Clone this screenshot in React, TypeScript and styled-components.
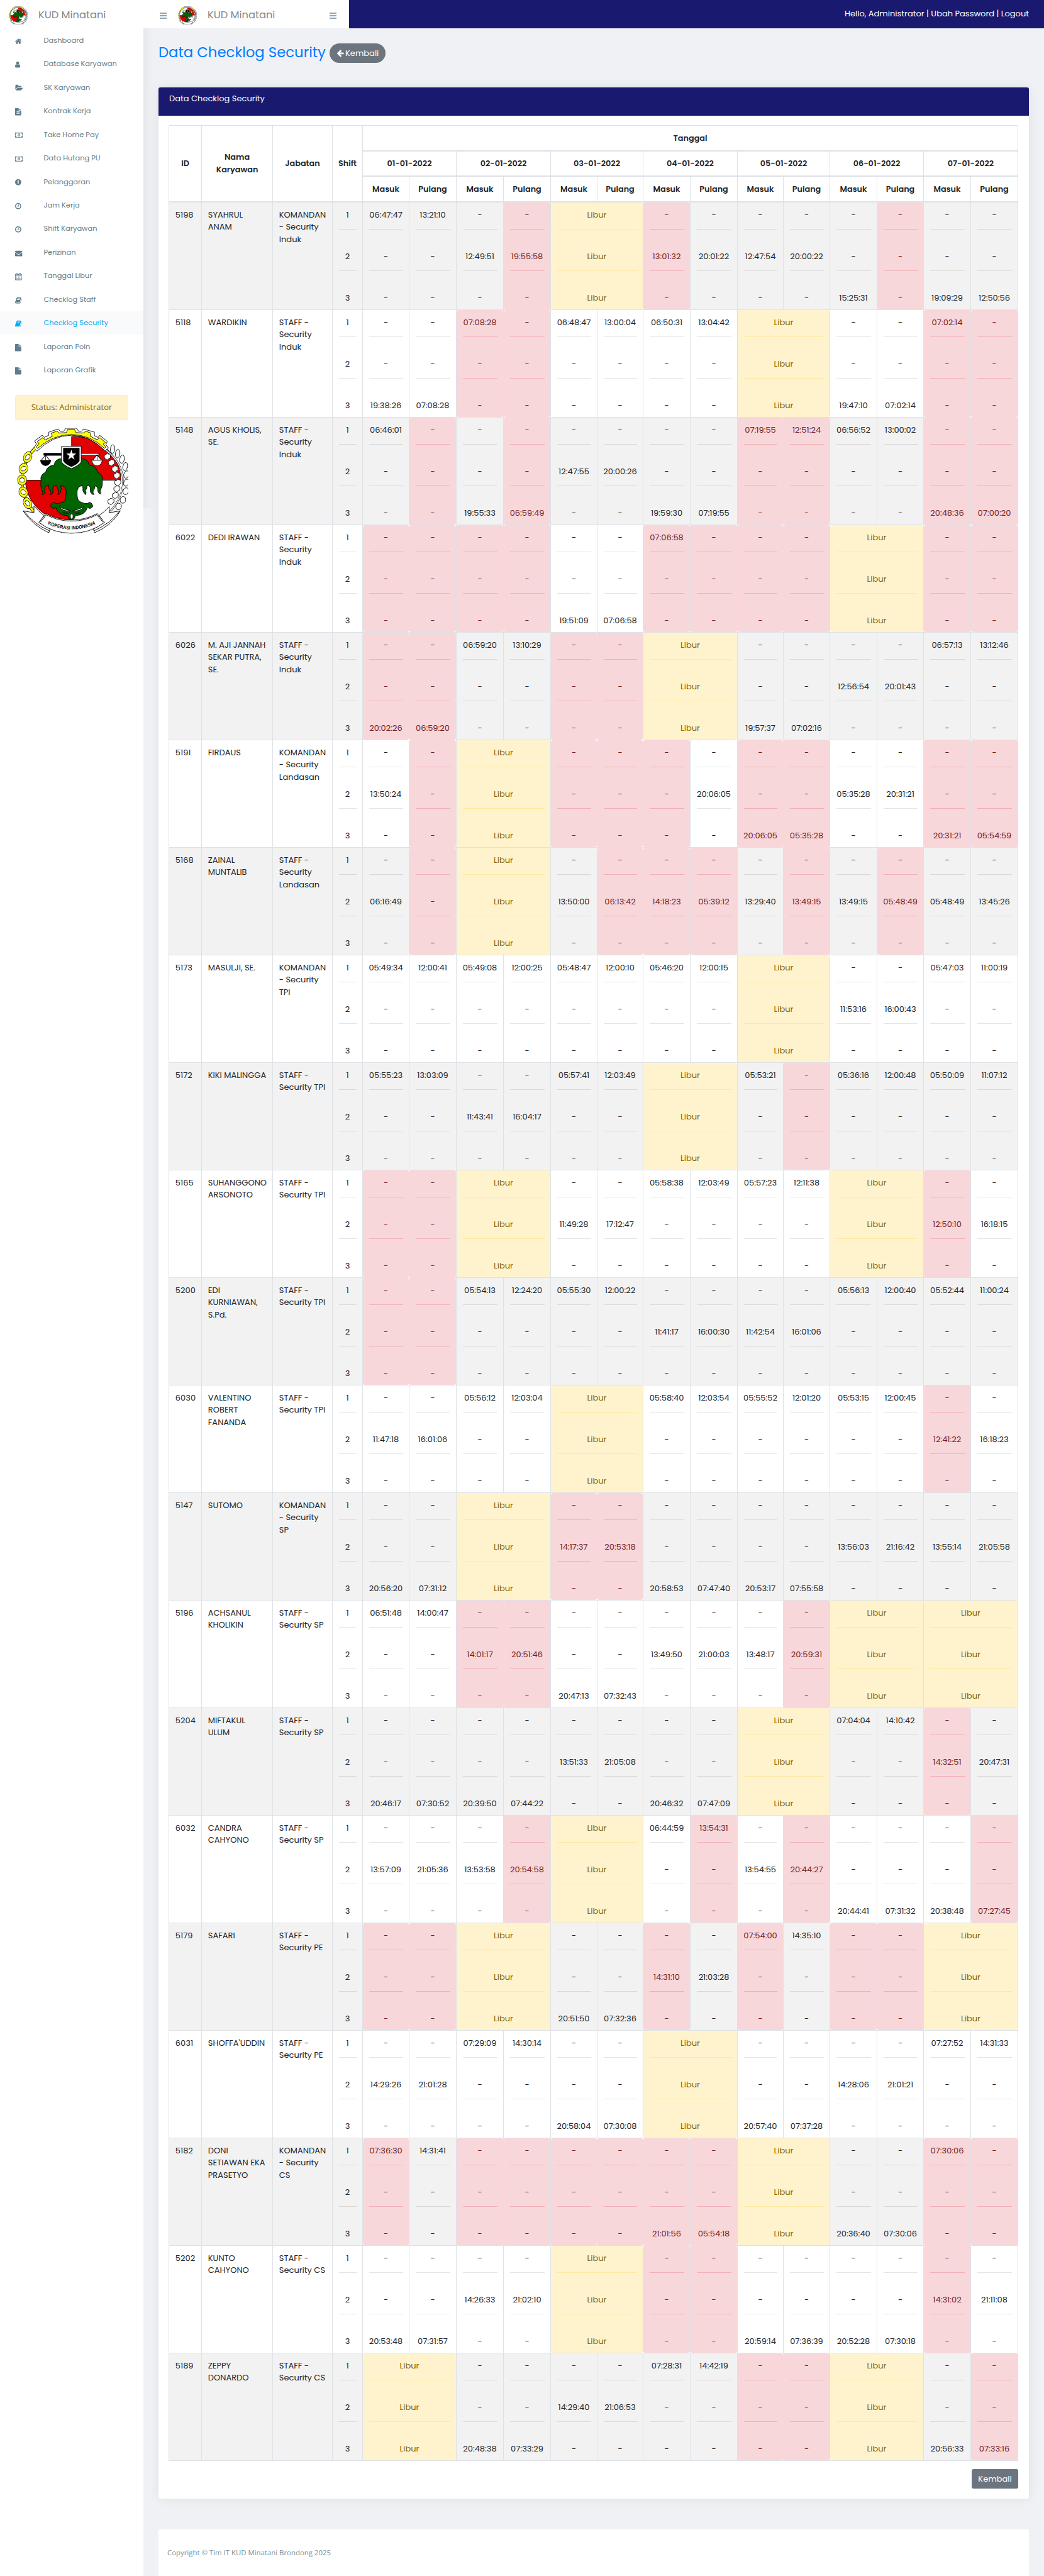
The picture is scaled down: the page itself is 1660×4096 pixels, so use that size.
import React from "react";
import styled, { createGlobalStyle, css } from "styled-components";

const GlobalStyle = createGlobalStyle`
  *, *::before, *::after { box-sizing: border-box; }
  html, body { margin: 0; padding: 0; }
  body {
    background: #eff1f5;
    color: #212529;
    font-family: Poppins, Inter, "Open Sans", sans-serif;
    font-size: 13.02px;
    line-height: 19.54px;
  }
`;

/* ---------- icons ---------- */

type Glyph = { x: number; d: string };

const glyphs: Record<string, Glyph> = {
  home: { x: 96, d: "M1472 992v480q0 26-19 45t-45 19h-384v-384h-256v384h-384q-26 0-45-19t-19-45v-480q0-1 .5-3t.5-3l575-474 575 474q1 2 1 6zm223-69l-62 74q-8 9-21 11h-3q-13 0-21-7l-692-577-692 577q-12 8-24 7-13-2-21-11l-62-74q-8-10-7-23.5t11-21.5l719-599q32-26 76-26t76 26l244 204v-195q0-14 9-23t23-9h192q14 0 23 9t9 23v408l219 182q10 8 11 21.5t-7 23.5z" },
  user: { x: 256, d: "M1536 1399q0 109-62.5 187t-150.5 78h-854q-88 0-150.5-78t-62.5-187q0-85 8.5-160.5t31.5-152 58.5-131 94-89 134.5-34.5q131 128 313 128t313-128q76 0 134.5 34.5t94 89 58.5 131 31.5 152 8.5 160.5zm-256-887q0 159-112.5 271.5t-271.5 112.5-271.5-112.5-112.5-271.5 112.5-271.5 271.5-112.5 271.5 112.5 112.5 271.5z" },
  folder: { x: 0, d: "M1943 952q0 31-31 66l-336 396q-43 51-120.5 86.5t-143.5 35.5h-1088q-34 0-60.5-13t-26.5-43q0-31 31-66l336-396q43-51 120.5-86.5t143.5-35.5h1088q34 0 60.5 13t26.5 43zm-343-344v160h-832q-94 0-197 47.5t-164 119.5l-337 396-5 6q0-4-.5-12.5t-.5-12.5v-960q0-92 66-158t158-66h320q92 0 158 66t66 158v32h544q92 0 158 66t66 158z" },
  fileText: { x: 128, d: "M1596 476q14 14 28 36h-472v-472q22 14 36 28zm-476 164h544v1056q0 40-28 68t-68 28h-1344q-40 0-68-28t-28-68v-1600q0-40 28-68t68-28h800v544q0 40 28 68t68 28zm160 736v-64q0-14-9-23t-23-9h-704q-14 0-23 9t-9 23v64q0 14 9 23t23 9h704q14 0 23-9t9-23zm0-256v-64q0-14-9-23t-23-9h-704q-14 0-23 9t-9 23v64q0 14 9 23t23 9h704q14 0 23-9t9-23zm0-256v-64q0-14-9-23t-23-9h-704q-14 0-23 9t-9 23v64q0 14 9 23t23 9h704q14 0 23-9t9-23z" },
  file: { x: 128, d: "M1152 512v-472q22 14 36 28l408 408q14 14 28 36h-472zm-128 32q0 40 28 68t68 28h544v1056q0 40-28 68t-68 28h-1344q-40 0-68-28t-28-68v-1600q0-40 28-68t68-28h800v544z" },
  money: { x: 0, d: "M768 1152h384v-96h-128v-448h-114l-148 137 77 80q42-37 55-57h2v288h-128v96zm512-256q0 70-21 142t-59.5 134-101.5 101-138 39-138-39-101.5-101-59.5-134-21-142 21-142 59.5-134 101.5-101 138-39 138 39 101.5 101 59.5 134 21 142zm512 256v-512q-106 0-181-75t-75-181h-1152q0 106-75 181t-181 75v512q106 0 181 75t75 181h1152q0-106 75-181t181-75zm128-832v1152q0 26-19 45t-45 19h-1792q-26 0-45-19t-19-45v-1152q0-26 19-45t45-19h1792q26 0 45 19t19 45z" },
  alert: { x: 128, d: "M896 128q209 0 385.5 103t279.5 279.5 103 385.5-103 385.5-279.5 279.5-385.5 103-385.5-103-279.5-279.5-103-385.5 103-385.5 279.5-279.5 385.5-103zm128 1247v-190q0-14-9-23.5t-22-9.5h-192q-13 0-23 10t-10 23v190q0 13 10 23t23 10h192q13 0 22-9.5t9-23.5zm-2-344l18-621q0-12-10-18-10-8-24-8h-220q-14 0-24 8-10 6-10 18l17 621q0 10 10 17.5t24 7.5h185q14 0 23.5-7.5t10.5-17.5z" },
  clock: { x: 128, d: "M1024 544v448q0 14-9 23t-23 9h-320q-14 0-23-9t-9-23v-64q0-14 9-23t23-9h224v-352q0-14 9-23t23-9h64q14 0 23 9t9 23zm416 352q0-148-73-273t-198-198-273-73-273 73-198 198-73 273 73 273 198 198 273 73 273-73 198-198 73-273zm224 0q0 209-103 385.5t-279.5 279.5-385.5 103-385.5-103-279.5-279.5-103-385.5 103-385.5 279.5-279.5 385.5-103 385.5 103 279.5 279.5 103 385.5z" },
  mail: { x: 0, d: "M1792 710v794q0 66-47 113t-113 47h-1472q-66 0-113-47t-47-113v-794q44 49 101 87 362 246 497 345 57 42 92.5 65.5t94.5 48 110 24.5h2q51 0 110-24.5t94.5-48 92.5-65.5q170-123 498-345 57-39 100-87zm0-294q0 79-49 151t-122 123q-376 261-468 325-10 7-42.5 31t-54 38.5-52 32.5-57.5 27-50 9h-2q-23 0-50-9t-57.5-27-52-32.5-54-38.5-42.5-31q-91-64-262-182.5t-205-142.5q-62-42-117-115.5t-55-136.5q0-78 41.5-130t118.5-52h1472q65 0 112.5 47t47.5 113z" },
  calendar: { x: 64, d: "M192 1664h288v-288h-288v288zm352 0h320v-288h-320v288zm-352-352h288v-320h-288v320zm352 0h320v-320h-320v320zm-352-384h288v-288h-288v288zm736 736h320v-288h-320v288zm-384-736h320v-288h-320v288zm768 736h288v-288h-288v288zm-384-352h320v-320h-320v320zm-352-864v-288q0-13-9.5-22.5t-22.5-9.5h-64q-13 0-22.5 9.5t-9.5 22.5v288q0 13 9.5 22.5t22.5 9.5h64q13 0 22.5-9.5t9.5-22.5zm736 864h288v-320h-288v320zm-384-384h320v-288h-320v288zm384 0h288v-288h-288v288zm32-480v-288q0-13-9.5-22.5t-22.5-9.5h-64q-13 0-22.5 9.5t-9.5 22.5v288q0 13 9.5 22.5t22.5 9.5h64q13 0 22.5-9.5t9.5-22.5zm384-64v1280q0 52-38 90t-90 38h-1408q-52 0-90-38t-38-90v-1280q0-52 38-90t90-38h128v-96q0-66 47-113t113-47h64q66 0 113 47t47 113v96h384v-96q0-66 47-113t113-47h64q66 0 113 47t47 113v96h128q52 0 90 38t38 90z" },
  book: { x: 64, d: "M1703 478q40 57 18 129l-275 906q-19 64-76.5 107.5t-122.5 43.5h-923q-77 0-148.5-53.5t-99.5-131.5q-24-67-2-127 0-4 3-27t4-37q1-8-3-21.5t-3-19.5q2-11 8-21t16.5-23.5 16.5-23.5q23-38 45-91.5t30-91.5q3-10 .5-30t-.5-28q3-11 17-28t17-23q21-36 42-92t25-90q1-9-2.5-32t.5-28q4-13 22-30.5t22-22.5q19-26 42.5-84.5t27.5-96.5q1-8-3-25.5t-2-26.5q2-8 9-18t18-23 17-21q8-12 16.5-30.5t15-35 16-36 19.5-32 26.5-23.5 36-11.5 47.5 5.5l-1 3q38-9 51-9h761q74 0 114 56t18 130l-274 906q-36 119-71.5 153.5t-128.5 34.5h-869q-27 0-38 15-11 16-1 43 24 70 144 70h923q29 0 56-15.5t35-41.5l300-987q7-22 5-57 38 15 59 43zm-1064 2q-4 13 2 22.5t20 9.5h608q13 0 25.5-9.5t16.5-22.5l21-64q4-13-2-22.5t-20-9.5h-608q-13 0-25.5 9.5t-16.5 22.5zm-83 256q-4 13 2 22.5t20 9.5h608q13 0 25.5-9.5t16.5-22.5l21-64q4-13-2-22.5t-20-9.5h-608q-13 0-25.5 9.5t-16.5 22.5z" },
  back: { x: 64, d: "M1664 896v128q0 53-32.5 90.5t-84.5 37.5h-704l293 294q38 36 38 90t-38 90l-75 76q-37 37-90 37-52 0-91-37l-651-652q-37-37-37-90 0-52 37-91l651-650q38-38 91-38 52 0 90 38l75 74q38 38 38 91t-38 91l-293 293h704q52 0 84.5 37.5t32.5 90.5z" },
};

const Icon = ({ name, size = 11.4 }: { name: string; size?: number }) => (
  <svg
    width={(size * 1984) / 1792}
    height={size}
    viewBox={`${glyphs[name].x} 0 1984 1792`}
    fill="currentColor"
    aria-hidden
  >
    <path d={glyphs[name].d} />
  </svg>
);

const MenuIcon = () => (
  <svg width="11" height="10" viewBox="0 0 11 10" fill="currentColor" aria-hidden>
    <rect width="11" height="2" />
    <rect y="4" width="11" height="2" />
    <rect y="8" width="11" height="2" />
  </svg>
);

/* ---------- cooperative emblem ---------- */

const links = [
  { x: 245, y: 1096, r: -25 },
  { x: 208, y: 1162, r: -12 },
  { x: 196, y: 1228, r: 0 },
  { x: 207, y: 1297, r: 12 },
  { x: 244, y: 1361, r: 25 },
];
const bars = [
  [308, 1047, 258, 1082],
  [236, 1112, 219, 1146],
  [200, 1178, 195, 1213],
  [196, 1246, 203, 1280],
  [214, 1315, 234, 1348],
  [258, 1376, 298, 1410],
];
const cotton = [
  [937, 1094], [972, 1129], [1003, 1165], [1020, 1203], [1028, 1243], [1020, 1279], [1006, 1317], [968, 1352],
];
const grains = [
  [988, 1050, 10], [1032, 1076, 20], [1070, 1108, 25], [1098, 1150, 35], [1108, 1196, 55], [1108, 1243, 65], [1103, 1292, 72], [1078, 1342, 80], [1040, 1380, 85],
];

const Emblem = ({ width, height, line, label }: { width: number; height: number; line: number; label?: boolean }) => (
  <svg width={width} height={height} viewBox="135 930 990 608" preserveAspectRatio="none" aria-hidden>
    <g stroke="#000" strokeWidth={line} strokeLinejoin="round">
      <ellipse cx="629" cy="1229" rx="432" ry="262" fill="#fff" stroke="none" />
      <path d="M629 977A410 252 0 0 1 1060 1229H629Z" fill="#e30000" vectorEffect="non-scaling-stroke" />
      <path d="M629 1468A400 244 0 0 1 225 1229H629Z" fill="#e30000" vectorEffect="non-scaling-stroke" />
      <path d="M299 1043L322 1020 306 1003 372 970 392 982 430 970V952L512 934 530 947H560L578 930H672L690 947H715L733 934 828 952V972L862 983 874 970 942 1006 928 1024 951 1043 922 1060Q790 970 629 970T326 1062Z" fill="#fff" vectorEffect="non-scaling-stroke" />
      <path d="M318 1038L345 1017 328 1008 373 984 402 996 460 976 452 958 502 946 520 957 583 955 597 935H652L668 955 735 957 752 946 798 958 794 976 852 996 878 984 925 1012 905 1021 930 1037 918 1046Q790 966 629 966T331 1046Z" fill="#ff0" vectorEffect="non-scaling-stroke" />
      {bars.map(([a, b, c, d]) => (
        <g key={a + b}>
          <path d={`M${a} ${b}L${c} ${d}`} strokeWidth="22" />
          <path d={`M${a} ${b}L${c} ${d}`} stroke="#ff0" strokeWidth="15" />
        </g>
      ))}
      {links.map((l) => (
        <g key={l.y} fill="none" transform={`rotate(${l.r} ${l.x} ${l.y})`}>
          <ellipse cx={l.x} cy={l.y} rx="32" ry="21" strokeWidth="19" />
          <ellipse cx={l.x} cy={l.y} rx="32" ry="21" stroke="#ff0" strokeWidth="13" />
        </g>
      ))}
      <path d="M930 1055Q1075 1130 1078 1229T962 1412" fill="none" strokeWidth="12" />
      <path d="M930 1055Q1075 1130 1078 1229T962 1412" fill="none" stroke="#fff" strokeWidth="7" />
      {grains.map(([x, y, r]) => (
        <ellipse key={y} cx={x} cy={y} rx="19" ry="25" fill="#fff" transform={`rotate(${r} ${x} ${y})`} vectorEffect="non-scaling-stroke" />
      ))}
      {cotton.map(([x, y]) => (
        <path key={y} d={`M${x - 22} ${y}q0-14 16-12q8-14 20-4q20-2 18 12q4 14-14 14q-12 14-24 4q-16 0-16-14Z`} fill="#fff" vectorEffect="non-scaling-stroke" />
      ))}
      <path d="M545 1104Q485 1105 476 1142Q415 1145 402 1182Q350 1200 362 1230Q352 1262 372 1290Q384 1300 374 1312Q400 1306 397 1290Q380 1260 428 1259Q424 1275 444 1290Q456 1300 442 1312Q470 1306 466 1288Q456 1258 500 1259Q500 1275 516 1290Q520 1302 506 1312Q534 1306 534 1288Q545 1282 532 1262Q590 1255 581 1310Q580 1355 545 1356Q500 1370 474 1356Q446 1360 446 1380Q466 1400 490 1384Q510 1430 590 1432Q603 1432 600 1445L629 1464L658 1445Q655 1432 668 1432Q748 1430 768 1384Q792 1400 814 1380Q812 1360 786 1356Q758 1370 715 1356Q678 1350 677 1310Q672 1262 725 1260Q730 1275 728 1290Q740 1306 750 1312Q764 1302 748 1288Q764 1282 764 1260Q792 1258 792 1275Q788 1290 800 1304Q808 1312 826 1311Q808 1298 824 1284Q836 1278 832 1262Q860 1262 858 1290Q866 1308 884 1309Q874 1296 888 1276Q904 1255 898 1232Q908 1200 856 1182Q846 1145 784 1142Q770 1105 712 1104Z" fill="#006400" vectorEffect="non-scaling-stroke" />
      <g fill="#fff">
        <path d="M520 1380Q560 1398 618 1403 550 1412 520 1380ZM738 1380Q698 1398 640 1403 708 1412 738 1380ZM552 1416Q600 1420 618 1410 610 1428 552 1416ZM706 1416Q658 1420 640 1410 648 1428 706 1416Z" vectorEffect="non-scaling-stroke" />
        <ellipse cx="630" cy="1437" rx="12" ry="15" vectorEffect="non-scaling-stroke" />
      </g>
      <path d="M390 1080H545" strokeWidth="15" strokeLinecap="round" />
      <path d="M710 1080H865" strokeWidth="13" strokeLinecap="round" />
      <path d="M710 1080H862" stroke="#fff" strokeWidth="7" strokeLinecap="round" />
      <path d="M402 1084L362 1116M402 1084V1114M402 1084L440 1116" fill="none" strokeWidth="4" />
      <path d="M354 1114H450Q440 1146 402 1146T354 1114Z" />
      <path d="M852 1082L812 1116H892ZM852 1082V1116" fill="#fff" strokeWidth="4" />
      <path d="M804 1114H898Q888 1146 852 1146T804 1114Z" fill="#fff" vectorEffect="non-scaling-stroke" />
      <path d="M541 1034H713V1124Q690 1146 627 1162 565 1146 541 1124Z" fill="#fff" vectorEffect="non-scaling-stroke" />
      <path d="M556 1043H698V1118Q680 1138 627 1152 575 1138 556 1118Z" />
      <path d="M627 1053L637 1075 669 1076 643 1089 655 1110 627 1097 599 1110 611 1089 583 1076 617 1075Z" fill="#fff" stroke="none" />
      <path d="M204 1405L300 1416V1376Q340 1410 388 1432L345 1472 440 1510 430 1531Q290 1490 204 1405ZM1056 1405L958 1416V1380Q915 1412 870 1432L915 1472 820 1510 830 1531Q980 1490 1056 1405Z" fill="#fff" vectorEffect="non-scaling-stroke" />
      <path d="M214 1408Q300 1482 436 1520M1046 1408Q960 1482 824 1520" fill="none" vectorEffect="non-scaling-stroke" />
      <path d="M343 1472L405 1421Q510 1458 629 1458T853 1421L917 1472Q790 1534 629 1534T343 1472Z" fill="#fff" vectorEffect="non-scaling-stroke" />
      <path d="M357 1470L408 1428Q510 1464 629 1464T850 1428L904 1470" fill="none" vectorEffect="non-scaling-stroke" />
    </g>
    {label && (
      <>
        <path id="ribbon" d="M422 1482Q520 1512 629 1512T842 1480" fill="none" />
        <text fontFamily="Liberation Sans, sans-serif" fontWeight="700" fontSize="29" textLength="420" lengthAdjust="spacingAndGlyphs">
          <textPath href="#ribbon" textLength="420" lengthAdjust="spacingAndGlyphs">KOPERASI INDONESIA</textPath>
        </text>
      </>
    )}
  </svg>
);

/* ---------- page frame ---------- */

const Page = styled.div`
  width: 1660px;
  height: 4096px;
  display: flex;
  flex-direction: column;
  overflow: hidden;
`;

const TopBar = styled.header`
  display: flex;
  height: 45px;
  flex: none;
  background: #fff;
`;

const Brand = styled.div`
  display: flex;
  align-items: center;
  gap: 17px;
  padding: 4px 0 0 14px;
  width: 228px;
`;

const BrandName = styled.span`
  color: #868686;
  font-size: 16.28px;
  line-height: 20px;
  margin-top: -2px;
`;

const ToggleArea = styled.div`
  display: flex;
  align-items: center;
  width: 327px;
  color: #90a4ae;
  padding: 4px 0 0 26px;

  ${Brand} { padding: 0 0 0 18px; width: 259px; }
  svg { flex: none; }
`;

const UserBar = styled.nav`
  display: flex;
  align-items: center;
  justify-content: flex-end;
  flex: 1;
  height: 44.5px;
  padding: 0 24px 0 0;
  background: #191970;
  color: #fff;
  white-space: pre;
`;

const Columns = styled.div`
  display: flex;
  flex: 1;
  min-height: 0;
`;

const SideBar = styled.aside`
  position: relative;
  width: 228px;
  flex: none;
  background: #fff;

  /* soft edge cast over the page, only as tall as the first screen */
  &::after {
    content: "";
    position: absolute;
    top: 0;
    left: 100%;
    width: 18px;
    height: 763px;
    background: linear-gradient(to right, rgba(0, 0, 0, 0.042), rgba(0, 0, 0, 0.014) 50%, rgba(0, 0, 0, 0));
  }
`;

const MenuItem = styled.a<{ $active?: boolean }>`
  display: flex;
  align-items: center;
  gap: 32.5px;
  height: 37.47px;
  padding-left: 24.4px;
  color: ${(p) => (p.$active ? "#03a9f4" : "#607d8b")};
  background: ${(p) => (p.$active ? "#f9fafb" : "transparent")};
  font-size: 11.4px;
  line-height: 20px;

  svg { margin-top: 3px; flex: none; overflow: visible; }
`;

const SideFoot = styled.div`
  display: flex;
  flex-direction: column;
  gap: 13px;
  padding: 21px 24px 0;
`;

const Status = styled.div`
  display: flex;
  align-items: center;
  justify-content: center;
  height: 40px;
  border: 1px solid #ffeeba;
  border-radius: 3px;
  background: #fff3cd;
  color: #856404;
  font-family: "Open Sans", sans-serif;
`;

const Content = styled.main`
  flex: 1;
  display: flex;
  flex-direction: column;
  padding: 0 24px;
`;

const TitleRow = styled.div`
  display: flex;
  align-items: flex-start;
  justify-content: flex-start;
  height: 94px;
  flex: none;
  gap: 7px;
  padding-top: 24px;
`;

const Title = styled.h3`
  margin: 0;
  width: 265px;
  color: #007bff;
  font-size: 22.79px;
  font-weight: 400;
  line-height: 28px;
  white-space: nowrap;
`;

const Button = styled.button<{ $pill?: boolean }>`
  display: flex;
  align-items: center;
  justify-content: center;
  height: 31px;
  width: ${(p) => (p.$pill ? "89px" : "74px")};
  padding: 0;
  border: 0;
  border-radius: ${(p) => (p.$pill ? "16px" : "3px")};
  background: #6c757d;
  color: #fff;
  font: inherit;
`;

const Card = styled.section`
  flex: none;
  height: 3834px;
  border-radius: 4px;
  background: #fff;
  box-shadow: 0 0 18px rgba(0, 0, 0, 0.075);
`;

const CardHead = styled.div`
  height: 45px;
  padding: 8px 17px;
  border-radius: 3px 3px 0 0;
  background: #191970;
  color: #fff;
`;

const CardBody = styled.div`
  display: flex;
  flex-direction: column;
  align-items: flex-end;
  gap: 13px;
  padding: 16px 17px 0;
`;

const Footer = styled.footer`
  flex: 1;
  margin-top: 49px;
  padding: 27px 14px;
  background: #fff;
  color: #78909c;
  font-family: "Open Sans", sans-serif;
  font-size: 11.4px;
`;

/* ---------- table ---------- */

const columnTracks = "52px 113px 95px 48px 74px 75px 75px 75px 74px 73px 75px 75px 73px 74px 75px 74px 75px 75px";

const Table = styled.div`
  width: 1350px;
  box-shadow: -1px 0 0 #dee2e6, 0 -1px 0 #dee2e6;
`;

const HeadGrid = styled.div`
  display: grid;
  grid-template-columns: ${columnTracks};
  grid-template-rows: 41px 40px 41px;
`;

const HeadCell = styled.div<{ $span?: number; $tall?: boolean }>`
  display: flex;
  align-items: center;
  justify-content: center;
  grid-column: span ${(p) => p.$span ?? 1};
  grid-row: ${(p) => (p.$tall ? "1 / span 3" : "auto")};
  border-right: 1px solid #dee2e6;
  border-bottom: 2px solid #dee2e6;
  font-weight: 600;
  font-size: 12.8px;
  text-align: center;
  white-space: pre;
`;

const Row = styled.div<{ $striped: boolean }>`
  display: grid;
  grid-template-columns: ${columnTracks};
  height: 171px;
  background: ${(p) => (p.$striped ? "#f2f2f2" : "#fff")};
`;

const InfoCell = styled.div`
  padding: 9.8px 0 0 9.8px;
  border-right: 1px solid #dee2e6;
  border-bottom: 1px solid #dee2e6;
  white-space: pre;
`;

type Tone = "plain" | "danger" | "warning";

const tones = {
  plain: { bg: "transparent", back: "transparent", ink: "#212529", rule: "rgba(0,0,0,0.1)" },
  danger: { bg: "#f8d7da", back: "#fff", ink: "#721c24", rule: "#f1b0b7" },
  warning: { bg: "#fff3cd", back: "#fff", ink: "#856404", rule: "#ffe8a1" },
};

const ShiftCell = styled.div<{ $tone: Tone; $span?: number }>`
  grid-column: span ${(p) => p.$span ?? 1};
  border-right: 1px solid #dee2e6;
  border-bottom: 1px solid #dee2e6;
  ${(p) => css`
    background: ${tones[p.$tone].back};
    color: ${tones[p.$tone].ink};
  `}
`;

const ShiftStack = styled.div<{ $tone: Tone }>`
  height: 170px;
  padding: 9.8px 9.5px 0;
  border-radius: 3px;
  background: ${(p) => tones[p.$tone].bg};
  display: flex;
  flex-direction: column;
`;

const Slot = styled.div`
  display: flex;
  justify-content: center;
  height: 19.54px;
  white-space: nowrap;
`;

const Rule = styled.hr<{ $tone: Tone }>`
  width: 100%;
  height: 1px;
  margin: 13px 0 32.4px;
  border: 0;
  background: ${(p) => tones[p.$tone].rule};
`;

/* ---------- data ---------- */

/* Each day is "masuk,pulang". A cell is "<shift> <time>"; "!" flags a violation; "L" is a day off. */
type Person = [id: string, name: string, role: string, days: string[]];

const people: Person[] = [
  ["5198", "SYAHRUL\nANAM", "KOMANDAN\n- Security\nInduk", ["1 06:47:47,1 13:21:10", "2 12:49:51,!2 19:55:58", "L", "!2 13:01:32,2 20:01:22", "2 12:47:54,2 20:00:22", "3 15:25:31,!", "3 19:09:29,3 12:50:56"]],
  ["5118", "WARDIKIN", "STAFF -\nSecurity\nInduk", ["3 19:38:26,3 07:08:28", "!1 07:08:28,!", "1 06:48:47,1 13:00:04", "1 06:50:31,1 13:04:42", "L", "3 19:47:10,3 07:02:14", "!1 07:02:14,!"]],
  ["5148", "AGUS KHOLIS,\nSE.", "STAFF -\nSecurity\nInduk", ["1 06:46:01,!", "3 19:55:33,!3 06:59:49", "2 12:47:55,2 20:00:26", "3 19:59:30,3 07:19:55", "!1 07:19:55,!1 12:51:24", "1 06:56:52,1 13:00:02", "!3 20:48:36,!3 07:00:20"]],
  ["6022", "DEDI IRAWAN", "STAFF -\nSecurity\nInduk", ["!,!", "!,!", "3 19:51:09,3 07:06:58", "!1 07:06:58,!", "!,!", "L", "!,!"]],
  ["6026", "M. AJI JANNAH\nSEKAR PUTRA,\nSE.", "STAFF -\nSecurity\nInduk", ["!3 20:02:26,!3 06:59:20", "1 06:59:20,1 13:10:29", "!,!", "L", "3 19:57:37,3 07:02:16", "2 12:56:54,2 20:01:43", "1 06:57:13,1 13:12:46"]],
  ["5191", "FIRDAUS", "KOMANDAN\n- Security\nLandasan", ["2 13:50:24,!", "L", "!,!", "!,2 20:06:05", "!3 20:06:05,!3 05:35:28", "2 05:35:28,2 20:31:21", "!3 20:31:21,!3 05:54:59"]],
  ["5168", "ZAINAL\nMUNTALIB", "STAFF -\nSecurity\nLandasan", ["2 06:16:49,!", "L", "2 13:50:00,!2 06:13:42", "!2 14:18:23,!2 05:39:12", "2 13:29:40,!2 13:49:15", "2 13:49:15,!2 05:48:49", "2 05:48:49,2 13:45:26"]],
  ["5173", "MASULJI, SE.", "KOMANDAN\n- Security\nTPI", ["1 05:49:34,1 12:00:41", "1 05:49:08,1 12:00:25", "1 05:48:47,1 12:00:10", "1 05:46:20,1 12:00:15", "L", "2 11:53:16,2 16:00:43", "1 05:47:03,1 11:00:19"]],
  ["5172", "KIKI MALINGGA", "STAFF -\nSecurity TPI", ["1 05:55:23,1 13:03:09", "2 11:43:41,2 16:04:17", "1 05:57:41,1 12:03:49", "L", "1 05:53:21,!", "1 05:36:16,1 12:00:48", "1 05:50:09,1 11:07:12"]],
  ["5165", "SUHANGGONO\nARSONOTO", "STAFF -\nSecurity TPI", ["!,!", "L", "2 11:49:28,2 17:12:47", "1 05:58:38,1 12:03:49", "1 05:57:23,1 12:11:38", "L", "!2 12:50:10,2 16:18:15"]],
  ["5200", "EDI\nKURNIAWAN,\nS.Pd.", "STAFF -\nSecurity TPI", ["!,!", "1 05:54:13,1 12:24:20", "1 05:55:30,1 12:00:22", "2 11:41:17,2 16:00:30", "2 11:42:54,2 16:01:06", "1 05:56:13,1 12:00:40", "1 05:52:44,1 11:00:24"]],
  ["6030", "VALENTINO\nROBERT\nFANANDA", "STAFF -\nSecurity TPI", ["2 11:47:18,2 16:01:06", "1 05:56:12,1 12:03:04", "L", "1 05:58:40,1 12:03:54", "1 05:55:52,1 12:01:20", "1 05:53:15,1 12:00:45", "!2 12:41:22,2 16:18:23"]],
  ["5147", "SUTOMO", "KOMANDAN\n- Security\nSP", ["3 20:56:20,3 07:31:12", "L", "!2 14:17:37,!2 20:53:18", "3 20:58:53,3 07:47:40", "3 20:53:17,3 07:55:58", "2 13:56:03,2 21:16:42", "2 13:55:14,2 21:05:58"]],
  ["5196", "ACHSANUL\nKHOLIKIN", "STAFF -\nSecurity SP", ["1 06:51:48,1 14:00:47", "!2 14:01:17,!2 20:51:46", "3 20:47:13,3 07:32:43", "2 13:49:50,2 21:00:03", "2 13:48:17,!2 20:59:31", "L", "L"]],
  ["5204", "MIFTAKUL\nULUM", "STAFF -\nSecurity SP", ["3 20:46:17,3 07:30:52", "3 20:39:50,3 07:44:22", "2 13:51:33,2 21:05:08", "3 20:46:32,3 07:47:09", "L", "1 07:04:04,1 14:10:42", "!2 14:32:51,2 20:47:31"]],
  ["6032", "CANDRA\nCAHYONO", "STAFF -\nSecurity SP", ["2 13:57:09,2 21:05:36", "2 13:53:58,!2 20:54:58", "L", "1 06:44:59,!1 13:54:31", "2 13:54:55,!2 20:44:27", "3 20:44:41,3 07:31:32", "3 20:38:48,!3 07:27:45"]],
  ["5179", "SAFARI", "STAFF -\nSecurity PE", ["!,!", "L", "3 20:51:50,3 07:32:36", "!2 14:31:10,2 21:03:28", "!1 07:54:00,1 14:35:10", "!,!", "L"]],
  ["6031", "SHOFFA'UDDIN", "STAFF -\nSecurity PE", ["2 14:29:26,2 21:01:28", "1 07:29:09,1 14:30:14", "3 20:58:04,3 07:30:08", "L", "3 20:57:40,3 07:37:28", "2 14:28:06,2 21:01:21", "1 07:27:52,1 14:31:33"]],
  ["5182", "DONI\nSETIAWAN EKA\nPRASETYO", "KOMANDAN\n- Security\nCS", ["!1 07:36:30,1 14:31:41", "!,!", "!,!", "!3 21:01:56,!3 05:54:18", "L", "3 20:36:40,3 07:30:06", "!1 07:30:06,!"]],
  ["5202", "KUNTO\nCAHYONO", "STAFF -\nSecurity CS", ["3 20:53:48,3 07:31:57", "2 14:26:33,2 21:02:10", "L", "!,!", "3 20:59:14,3 07:36:39", "3 20:52:28,3 07:30:18", "!2 14:31:02,2 21:11:08"]],
  ["5189", "ZEPPY\nDONARDO", "STAFF -\nSecurity CS", ["L", "3 20:48:38,3 07:33:29", "2 14:29:40,2 21:06:53", "1 07:28:31,1 14:42:19", "!,!", "L", "3 20:56:33,!3 07:33:16"]],
];

const dates = ["01", "02", "03", "04", "05", "06", "07"].map((d) => `${d}-01-2022`);

const menu = [
  ["home", "Dashboard"],
  ["user", "Database Karyawan"],
  ["folder", "SK Karyawan"],
  ["fileText", "Kontrak Kerja"],
  ["money", "Take Home Pay"],
  ["money", "Data Hutang PU"],
  ["alert", "Pelanggaran"],
  ["clock", "Jam Kerja"],
  ["clock", "Shift Karyawan"],
  ["mail", "Perizinan"],
  ["calendar", "Tanggal Libur"],
  ["book", "Checklog Staff"],
  ["book", "Checklog Security"],
  ["file", "Laporan Poin"],
  ["file", "Laporan Grafik"],
];

const Shifts = ({ values, tone = "plain", span }: { values: string[]; tone?: Tone; span?: number }) => (
  <ShiftCell $tone={tone} $span={span}>
    <ShiftStack $tone={tone}>
      {values.map((v, i) => (
        <React.Fragment key={i}>
          {i > 0 && <Rule $tone={tone} />}
          <Slot>{v}</Slot>
        </React.Fragment>
      ))}
    </ShiftStack>
  </ShiftCell>
);

const Day = ({ code }: { code: string }) => {
  if (code === "L") return <Shifts values={["Libur", "Libur", "Libur"]} tone="warning" span={2} />;
  return (
    <>
      {code.split(",").map((cell, i) => {
        const [shift, time] = cell.replace("!", "").split(" ");
        const values = ["1", "2", "3"].map((n) => (n === shift ? time : "-"));
        return <Shifts key={i} values={values} tone={cell.startsWith("!") ? "danger" : "plain"} />;
      })}
    </>
  );
};

const BrandBlock = () => (
  <Brand>
    <Emblem width={30} height={29} line={0.3} />
    <BrandName>KUD Minatani</BrandName>
  </Brand>
);

export default function App() {
  return (
    <Page>
      <GlobalStyle />
      <TopBar>
        <BrandBlock />
        <ToggleArea>
          <MenuIcon />
          <BrandBlock />
          <MenuIcon />
        </ToggleArea>
        <UserBar>Hello, Administrator | Ubah Password | Logout</UserBar>
      </TopBar>
      <Columns>
        <SideBar>
          {menu.map(([icon, label]) => (
            <MenuItem key={label} $active={label === "Checklog Security"}>
              <Icon name={icon} />
              <span>{label}</span>
            </MenuItem>
          ))}
          <SideFoot>
            <Status>Status: Administrator</Status>
            <Emblem width={180} height={168} line={0.9} label />
          </SideFoot>
        </SideBar>
        <Content>
          <TitleRow>
            <Title>Data Checklog Security</Title>
            <Button $pill>
              <Icon name="back" size={13} />
              Kembali
            </Button>
          </TitleRow>
          <Card>
            <CardHead>Data Checklog Security</CardHead>
            <CardBody>
              <Table>
                <HeadGrid>
                  <HeadCell $tall>ID</HeadCell>
                  <HeadCell $tall>{"Nama\nKaryawan"}</HeadCell>
                  <HeadCell $tall>Jabatan</HeadCell>
                  <HeadCell $tall>Shift</HeadCell>
                  <HeadCell $span={14}>Tanggal</HeadCell>
                  {dates.map((d) => (
                    <HeadCell key={d} $span={2}>{d}</HeadCell>
                  ))}
                  {dates.map((d) => (
                    <React.Fragment key={d}>
                      <HeadCell>Masuk</HeadCell>
                      <HeadCell>Pulang</HeadCell>
                    </React.Fragment>
                  ))}
                </HeadGrid>
                {people.map(([id, name, role, days], i) => (
                  <Row key={id} $striped={i % 2 === 0}>
                    <InfoCell>{id}</InfoCell>
                    <InfoCell>{name}</InfoCell>
                    <InfoCell>{role}</InfoCell>
                    <Shifts values={["1", "2", "3"]} />
                    {days.map((code, n) => (
                      <Day key={n} code={code} />
                    ))}
                  </Row>
                ))}
              </Table>
              <Button>Kembali</Button>
            </CardBody>
          </Card>
          <Footer>Copyright © Tim IT KUD Minatani Brondong 2025</Footer>
        </Content>
      </Columns>
    </Page>
  );
}
